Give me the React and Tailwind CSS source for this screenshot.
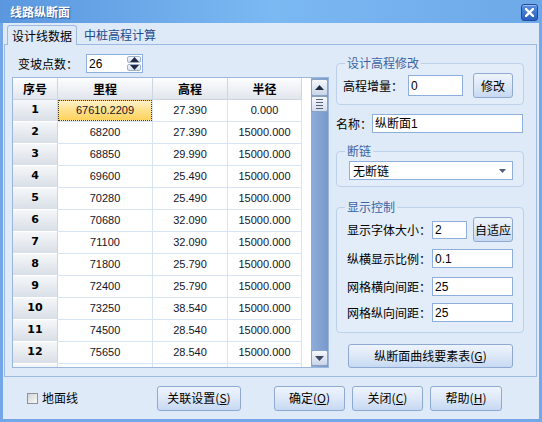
import React from "react";

const cjk = "font-['Noto_Sans_CJK_SC',sans-serif]";
const num = "font-['Liberation_Sans','Noto_Sans_CJK_SC',sans-serif]";

const rows = [
  ["1", "67610.2209", "27.390", "0.000"],
  ["2", "68200", "27.390", "15000.000"],
  ["3", "68850", "29.990", "15000.000"],
  ["4", "69600", "25.490", "15000.000"],
  ["5", "70280", "25.490", "15000.000"],
  ["6", "70680", "32.090", "15000.000"],
  ["7", "71100", "32.090", "15000.000"],
  ["8", "71800", "25.790", "15000.000"],
  ["9", "72400", "25.790", "15000.000"],
  ["10", "73250", "38.540", "15000.000"],
  ["11", "74500", "28.540", "15000.000"],
  ["12", "75650", "28.540", "15000.000"],
  ["", "", "", ""],
];

function Btn({ children, className = "" }) {
  return (
    <div
      className={`flex items-center justify-center rounded-[3px] border border-[#8eaad2] bg-gradient-to-b from-[#eef4fd] via-[#dde8f8] to-[#c6d9f2] text-[12px] leading-none text-black ${className}`}
    >
      {children}
    </div>
  );
}

function Input({ children, className = "" }) {
  return (
    <div
      className={`flex items-center border border-[#8eaedb] bg-white pl-[2px] text-[12px] leading-none text-black ${num} ${className}`}
    >
      {children}
    </div>
  );
}

function Group({ title, className = "", children }) {
  return (
    <fieldset
      className={`rounded-[4px] border border-[#bed1ea] bg-[#e3edfa] ${className}`}
    >
      <legend className="ml-[8px] px-[2px] text-[12px] leading-[14px] text-[#3d64a2]">
        {title}
      </legend>
      {children}
    </fieldset>
  );
}

function TriUp() {
  return (
    <svg width="9" height="5" viewBox="0 0 9 5">
      <path d="M0 5 L4.5 0 L9 5 Z" fill="#1f2a44" />
    </svg>
  );
}
function TriDown({ color = "#1f2a44" }) {
  return (
    <svg width="9" height="5" viewBox="0 0 9 5">
      <path d="M0 0 L4.5 5 L9 0 Z" fill={color} />
    </svg>
  );
}

function Table() {
  return (
    <div className="mt-[4px] flex h-[291px] overflow-hidden border border-[#9bb7dc] bg-white">
      <div className="flex flex-1 flex-col overflow-hidden">
        <div className="flex h-[22px] shrink-0 text-[12px] font-bold text-black">
          {[
            ["序号", "w-[45px]"],
            ["里程", "w-[95px]"],
            ["高程", "w-[75px]"],
            ["半径", "w-[74px]"],
          ].map(([t, w]) => (
            <div
              key={t}
              className={`${w} flex items-center justify-center border-b border-r border-[#cdd6e2] bg-gradient-to-b from-[#fdfdfe] to-[#e1e6ed] leading-none`}
            >
              {t}
            </div>
          ))}
        </div>
        {rows.map((r, i) => (
          <div key={i} className={`flex h-[22px] shrink-0 ${num} text-[11px] text-[#141428]`}>
            <div className="flex w-[45px] items-center justify-center border-b border-r border-b-white border-r-[#ccd5e1] bg-gradient-to-b from-[#f5f7f9] to-[#d9dfe7] font-['DejaVu_Sans',sans-serif] font-bold text-black">
              {r[0]}
            </div>
            <div className="flex w-[95px] items-center justify-center border-b border-r border-[#d6e4f6]">
              {i === 0 ? (
                <div className="flex h-full w-full items-center justify-center border border-dotted border-[#3a3a3a] bg-gradient-to-b from-[#fff3c9] via-[#ffe08a] to-[#ffd25a]">
                  {r[1]}
                </div>
              ) : (
                r[1]
              )}
            </div>
            <div className="flex w-[75px] items-center justify-center border-b border-r border-[#d6e4f6]">
              {r[2]}
            </div>
            <div className="flex w-[74px] items-center justify-center border-b border-r border-[#d6e4f6]">
              {r[3]}
            </div>
          </div>
        ))}
      </div>
      <div className="flex w-[17px] shrink-0 flex-col bg-gradient-to-r from-[#8eaedb] to-[#7898cb]">
        <div className="mt-[1px] flex h-[17px] items-center justify-center rounded-[2px] border border-[#8aa2c6] bg-gradient-to-b from-[#f6f8fc] to-[#c9d5e8]">
          <TriUp />
        </div>
        <div className="flex h-[16px] flex-col items-center justify-center gap-[2px] rounded-[2px] border border-[#8aa2c6] bg-gradient-to-b from-[#f6f8fc] to-[#d3ddec]">
          <div className="h-px w-[7px] bg-[#55627a]" />
          <div className="h-px w-[7px] bg-[#55627a]" />
          <div className="h-px w-[7px] bg-[#55627a]" />
          <div className="h-px w-[7px] bg-[#55627a]" />
        </div>
        <div className="flex-1" />
        <div className="mb-[1px] flex h-[16px] items-center justify-center rounded-[2px] border border-[#8aa2c6] bg-gradient-to-b from-[#f6f8fc] to-[#c9d5e8]">
          <TriDown color="#3a4766" />
        </div>
      </div>
    </div>
  );
}

export default function App() {
  return (
    <div className={`flex h-[422px] w-[542px] flex-col bg-[#74a7e7] ${cjk} text-[12px] text-black`}>
      {/* title bar */}
      <div className="flex h-[23px] shrink-0 items-start bg-gradient-to-r from-[#5b97de] via-[#7bb9f3] to-[#6da8e8]">
        <div className="ml-[10px] mt-[4px] text-[12px] font-bold leading-[15px] text-white [text-shadow:1px_1px_1px_#2d5a9a]">
          线路纵断面
        </div>
        <div className="flex-1" />
        <div className="mr-[4px] mt-[4px] flex h-[17px] w-[17px] items-center justify-center rounded-[3px] border border-[#1f4c9a] bg-gradient-to-b from-[#5a8fe0] to-[#2a5fc0] shadow-[inset_0_1px_0_#9cc0f4]">
          <svg width="9" height="9" viewBox="0 0 9 9">
            <path d="M1 1 L8 8 M8 1 L1 8" stroke="white" strokeWidth="2.4" strokeLinecap="square" />
          </svg>
        </div>
      </div>

      {/* body */}
      <div className="mx-[3px] mb-[3px] flex flex-1 flex-col bg-[#dfeaf9]">
        {/* tabs */}
        <div className="relative z-10 flex h-[21px] shrink-0 items-end pl-[4px]">
          <div className="-mb-px flex h-[20px] w-[70px] items-center rounded-t-[3px] border border-b-0 border-[#9dbbe2] bg-[#dfeaf9] pl-[4px] leading-none text-black">
            设计线数据
          </div>
          <div className="flex h-[18px] items-center pl-[7px] leading-none text-[#21498a]">
            中桩高程计算
          </div>
        </div>

        {/* tab panel */}
        <div className="ml-[1px] mr-[2px] flex h-[333px] shrink-0 border border-[#9dbbe2] pl-[7px]">
          {/* left column */}
          <div className="mt-[9px] flex w-[317px] flex-col">
            <div className="flex h-[19px] items-center">
              <span className="ml-[6px] w-[68px] leading-none">变坡点数：</span>
              <div className="flex h-[19px] w-[57px] border border-[#8eaedb] bg-white">
                <div className={`flex flex-1 items-center pl-[2px] text-[12px] leading-none ${num}`}>26</div>
                <div className="flex w-[16px] flex-col gap-px p-px">
                  <div className="flex flex-1 items-center justify-center rounded-[2px] border border-[#9fb2cc] bg-gradient-to-b from-[#f8fafd] to-[#d5deea]">
                    <TriUp />
                  </div>
                  <div className="flex flex-1 items-center justify-center rounded-[2px] border border-[#9fb2cc] bg-gradient-to-b from-[#f8fafd] to-[#d5deea]">
                    <TriDown />
                  </div>
                </div>
              </div>
            </div>
            <Table />
          </div>

          {/* right column */}
          <div className="ml-[7px] flex w-[188px] flex-col">
            <Group title="设计高程修改" className="mt-[11px] pb-[6px] pt-[3px]">
              <div className="flex h-[25px] items-center pl-[6px]">
                <span className="w-[65px] leading-none">高程增量：</span>
                <Input className="h-[21px] w-[55px]">0</Input>
                <Btn className="ml-[10px] h-[25px] w-[40px]">修改</Btn>
              </div>
            </Group>

            <div className="mt-[9px] flex h-[19px] items-center">
              <span className="w-[36px] leading-none">名称：</span>
              <Input className="h-[19px] w-[151px]">纵断面1</Input>
            </div>

            <Group title="断链" className="mt-[11px] pb-[6px] pt-[3px]">
              <div className="flex pl-[12px]">
                <div className="flex h-[19px] w-[164px] items-center justify-between border border-[#8eaedb] bg-white pl-[3px] pr-[6px] leading-none">
                  <span>无断链</span>
                  <svg width="7" height="4" viewBox="0 0 7 4">
                    <path d="M0 0 L3.5 4 L7 0 Z" fill="#4d5f80" />
                  </svg>
                </div>
              </div>
            </Group>

            <Group title="显示控制" className="mt-[13px] pb-[10px] pt-[3px]">
              <div className="flex flex-col pl-[10px]">
                <div className="flex h-[25px] items-center">
                  <span className="w-[85px] leading-none">显示字体大小：</span>
                  <Input className="h-[18px] w-[35px]">2</Input>
                  <Btn className="ml-[6px] h-[25px] w-[40px]">自适应</Btn>
                </div>
                <div className="mt-[7px] flex h-[19px] items-center">
                  <span className="w-[85px] leading-none">纵横显示比例：</span>
                  <Input className="h-[19px] w-[81px]">0.1</Input>
                </div>
                <div className="mt-[9px] flex h-[19px] items-center">
                  <span className="w-[85px] leading-none">网格横向间距：</span>
                  <Input className="h-[19px] w-[81px]">25</Input>
                </div>
                <div className="mt-[7px] flex h-[19px] items-center">
                  <span className="w-[85px] leading-none">网格纵向间距：</span>
                  <Input className="h-[19px] w-[81px]">25</Input>
                </div>
              </div>
            </Group>

            <Btn className="ml-[12px] mt-[11px] h-[24px] w-[165px]">
              纵断面曲线要素表(<span className="underline">G</span>)
            </Btn>
          </div>
        </div>

        {/* bottom bar */}
        <div className="flex flex-1 items-center pl-[24px]">
          <div className="flex w-[130px] items-center">
            <div className="h-[11px] w-[11px] border border-[#8e9296] bg-gradient-to-br from-[#d4d6d8] to-[#f8f8f8]" />
            <span className="ml-[4px] leading-none">地面线</span>
          </div>
          <Btn className="h-[25px] w-[84px]">
            关联设置(<span className="underline">S</span>)
          </Btn>
          <Btn className="ml-[33px] h-[25px] w-[71px]">
            确定(<span className="underline">O</span>)
          </Btn>
          <Btn className="ml-[7px] h-[25px] w-[71px]">
            关闭(<span className="underline">C</span>)
          </Btn>
          <Btn className="ml-[7px] h-[25px] w-[72px]">
            帮助(<span className="underline">H</span>)
          </Btn>
        </div>
      </div>
    </div>
  );
}
